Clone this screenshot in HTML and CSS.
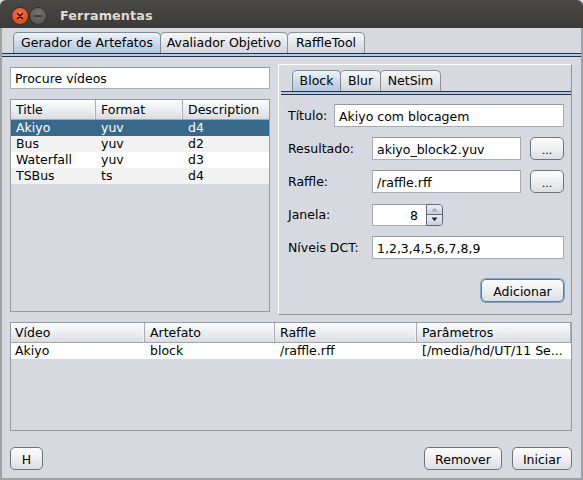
FILE: index.html
```html
<!DOCTYPE html>
<html>
<head>
<meta charset="utf-8">
<link rel="stylesheet" href="styles.css">
</head>
<body>
<div class="window">
  <div class="titlebar">
    <div class="wbtn close">
      <svg width="16" height="16" viewBox="0 0 16 16"><path d="M5.5 5.5 L10.5 10.5 M10.5 5.5 L5.5 10.5" stroke="#3a1208" stroke-width="1.5" stroke-linecap="round"/></svg>
    </div>
    <div class="wbtn min">
      <svg width="16" height="16" viewBox="0 0 16 16"><path d="M4.5 8 H11.5" stroke="#2e2e2c" stroke-width="1.6" stroke-linecap="round"/></svg>
    </div>
    <div class="wtitle">Ferramentas</div>
  </div>
  <div class="frame">
    <div class="tabs main-tabs">
      <div class="tab sel w-gerador">Gerador de Artefatos</div>
      <div class="tab w-aval">Avaliador Objetivo</div>
      <div class="tab w-raffle">RaffleTool</div>
    </div>
    <div class="tabline"></div>
    <div class="content">
      <div class="top">
        <div class="left">
          <div class="field search">Procure vídeos</div>
          <div class="table t1">
            <div class="thead tr">
              <div class="th">Title</div>
              <div class="th">Format</div>
              <div class="th">Description</div>
            </div>
            <div class="tr row selected"><div class="td">Akiyo</div><div class="td">yuv</div><div class="td">d4</div></div>
            <div class="tr row alt"><div class="td">Bus</div><div class="td">yuv</div><div class="td">d2</div></div>
            <div class="tr row"><div class="td">Waterfall</div><div class="td">yuv</div><div class="td">d3</div></div>
            <div class="tr row alt"><div class="td">TSBus</div><div class="td">ts</div><div class="td">d4</div></div>
          </div>
        </div>
        <div class="panel">
          <div class="tabs sub-tabs">
            <div class="tab sel w-block">Block</div>
            <div class="tab w-blur">Blur</div>
            <div class="tab w-netsim">NetSim</div>
          </div>
          <div class="tabline sub-line"></div>
          <div class="form">
            <div class="frow">
              <div class="lbl lbl-short">Título:</div>
              <div class="field grow">Akiyo com blocagem</div>
            </div>
            <div class="frow">
              <div class="lbl">Resultado:</div>
              <div class="field grow">akiyo_block2.yuv</div>
              <div class="btn dots">...</div>
            </div>
            <div class="frow">
              <div class="lbl">Raffle:</div>
              <div class="field grow">/raffle.rff</div>
              <div class="btn dots">...</div>
            </div>
            <div class="frow">
              <div class="lbl">Janela:</div>
              <div class="spinner">
                <div class="spin-field">8</div>
                <div class="spin-btns">
                  <div class="spin-up"><svg width="7" height="5" viewBox="0 0 7 5"><path d="M0.5 4.5 L3.5 0.8 L6.5 4.5 Z" fill="#a3a8b0"/></svg></div>
                  <div class="spin-down"><svg width="7" height="5" viewBox="0 0 7 5"><path d="M0.5 0.5 L3.5 4.2 L6.5 0.5 Z" fill="#1d2430"/></svg></div>
                </div>
              </div>
            </div>
            <div class="frow">
              <div class="lbl">Níveis DCT:</div>
              <div class="field grow">1,2,3,4,5,6,7,8,9</div>
            </div>
            <div class="frow end">
              <div class="btn focus add">Adicionar</div>
            </div>
          </div>
        </div>
      </div>
      <div class="table t2">
        <div class="thead tr">
          <div class="th">Vídeo</div>
          <div class="th">Artefato</div>
          <div class="th">Raffle</div>
          <div class="th">Parâmetros</div>
        </div>
        <div class="tr row"><div class="td">Akiyo</div><div class="td">block</div><div class="td">/raffle.rff</div><div class="td">[/media/hd/UT/11 Se...</div></div>
      </div>
      <div class="buttons">
        <div class="btn b-h">H</div>
        <div class="spacer"></div>
        <div class="btn b-rem">Remover</div>
        <div class="btn b-ini">Iniciar</div>
      </div>
    </div>
  </div>
</div>
</body>
</html>
```
FILE: styles.css
```css
* { box-sizing: border-box; }
body {
  margin: 0;
  background: #d9d9d9;
  font-family: "DejaVu Sans", sans-serif;
  font-size: 12.5px;
  color: #000;
}
.window {
  width: 583px;
  height: 480px;
  display: flex;
  flex-direction: column;
}
.titlebar {
  height: 28px;
  flex: none;
  background: linear-gradient(#4a4945, #3c3b37);
  border-radius: 6px 6px 0 0;
  display: flex;
  align-items: center;
  padding: 3px 0 0 12px;
}
.wbtn {
  width: 16px;
  height: 16px;
  border-radius: 50%;
  display: flex;
}
.close {
  background: radial-gradient(circle at 50% 35%, #f47a55, #df4a1d 70%, #c9401a);
  box-shadow: 0 0 0 1px #2f2e2b;
}
.min {
  margin-left: 2px;
  background: radial-gradient(circle at 50% 35%, #77776f, #5a5a55 70%, #4d4d49);
  box-shadow: 0 0 0 1px #2f2e2b;
}
.wtitle {
  margin-left: 14px;
  color: #dfdbd2;
  font-weight: bold;
  font-size: 12.8px;
  letter-spacing: 0.1px;
}
.frame {
  flex: 1;
  display: flex;
  flex-direction: column;
  background: #d6d9df;
  border: solid #a2a2a2;
  border-width: 0 2px 2px 2px;
}
.tabs {
  display: flex;
  height: 21px;
  flex: none;
}
.main-tabs {
  margin-top: 4px;
  padding-left: 11px;
}
.tab {
  height: 21px;
  border: 1px solid #8d9096;
  border-bottom: none;
  border-radius: 5px 5px 0 0;
  background: linear-gradient(#f6f7f8, #dcdfe4 70%, #d2d6dc);
  display: flex;
  align-items: center;
  justify-content: center;
  margin-right: -1px;
  line-height: 1;
  padding-top: 1px;
}
.tab.sel {
  background: linear-gradient(#eef3f8, #cad8e8 55%, #b5c8de);
  border-color: #7f8a99;
  position: relative;
  z-index: 1;
}
.w-gerador { width: 148px; }
.w-aval { width: 128px; }
.w-raffle { width: 78px; }
.w-block { width: 49px; }
.w-blur { width: 41px; }
.w-netsim { width: 61px; }
.tabline {
  height: 4px;
  flex: none;
  border-top: 1px solid #223249;
  border-bottom: 1px solid #223249;
  background: #b6cbe2;
}
.sub-line { margin: 0 0 0 2px; }
.content {
  flex: 1;
  display: flex;
  flex-direction: column;
  padding: 0 9px 8px 8px;
}
.top {
  display: flex;
  gap: 8px;
  padding-top: 7px;
}
.left {
  width: 260px;
  padding-top: 3px;
  display: flex;
  flex-direction: column;
  gap: 10px;
}
.field {
  height: 22px;
  background: #fff;
  border: 1px solid #a9adb3;
  border-top-color: #9398a0;
  display: flex;
  align-items: center;
  padding: 1px 0 0 4px;
  white-space: nowrap;
  overflow: hidden;
}
.search { padding-left: 4px; }
.table {
  background: #d6d9df;
  border: 1px solid #979ca3;
}
.t1 { height: 213px; }
.t1 .tr { display: grid; grid-template-columns: 85px 87px 86px; }
.t2 { height: 109px; margin-top: 7px; }
.t2 .tr { display: grid; grid-template-columns: 134px 130px 142px 154px; }
.thead {
  height: 20px;
  background: linear-gradient(#fbfcfc, #eceef1 50%, #d9dce1);
  border-bottom: 1px solid #a3a7ad;
}
.th {
  display: flex;
  align-items: center;
  padding: 0 0 0 5px;
  border-right: 1px solid #a9adb3;
  box-shadow: inset -1px 0 0 #f4f5f7;
}
.th:last-child { border-right: none; box-shadow: none; }
.t2 .th:last-child { border-right: 1px solid #a9adb3; }
.t2 .th:first-child { padding-left: 4px; }
.row {
  height: 16px;
  background: #fff;
}
.row.alt { background: #f2f2f2; }
.row.selected { background: #39698a; color: #fff; }
.td {
  padding-left: 5px;
  line-height: 16px;
  white-space: nowrap;
  overflow: hidden;
}
.t2 .td:first-child { padding-left: 4px; }
.panel {
  width: 294px;
  height: 251px;
  border: 1px solid #8f9399;
  border-top-color: #ffffff;
  border-left-color: #ffffff;
  display: flex;
  flex-direction: column;
}
.sub-tabs {
  margin-top: 5px;
  padding-left: 13px;
}
.form {
  padding: 9px 7px 0 9px;
  display: flex;
  flex-direction: column;
  gap: 10px;
}
.frow {
  display: flex;
  align-items: center;
  height: 23px;
}
.frow.end {
  justify-content: flex-end;
  margin-top: 10px;
}
.lbl {
  width: 84px;
  flex: none;
}
.lbl-short { width: 46px; }
.frow .field { height: 23px; }
.grow { flex: 1; }
.btn {
  height: 23px;
  border: 1px solid #6f737a;
  border-radius: 5px;
  background: linear-gradient(#fdfdfd, #eef0f2 45%, #dcdfe3 100%);
  display: flex;
  align-items: center;
  justify-content: center;
  padding-top: 1px;
  flex: none;
}
.dots {
  width: 34px;
  margin-left: 9px;
  font-size: 11px;
  padding-top: 3px;
}
.focus {
  box-shadow: 0 0 0 1px #7fa9d4;
}
.add { width: 83px; }
.spinner {
  width: 71px;
  height: 22px;
  display: flex;
}
.spin-field {
  flex: 1;
  background: #fff;
  border: 1px solid #a9adb3;
  border-top-color: #9398a0;
  border-right: none;
  display: flex;
  align-items: center;
  justify-content: flex-end;
  padding: 1px 8px 0 0;
}
.spin-btns {
  width: 17px;
  display: flex;
  flex-direction: column;
  border: 1px solid #5f6875;
  border-radius: 0 4px 4px 0;
  overflow: hidden;
}
.spin-up, .spin-down {
  flex: 1;
  display: flex;
  align-items: center;
  justify-content: center;
  background: linear-gradient(#edf1f5, #c5d0dc);
}
.spin-up { border-bottom: 1px solid #5f6875; }
.buttons {
  display: flex;
  margin-top: 16px;
  gap: 10px;
}
.spacer { flex: 1; }
.b-h { width: 33px; }
.b-rem { width: 78px; }
.b-ini { width: 60px; }
```
